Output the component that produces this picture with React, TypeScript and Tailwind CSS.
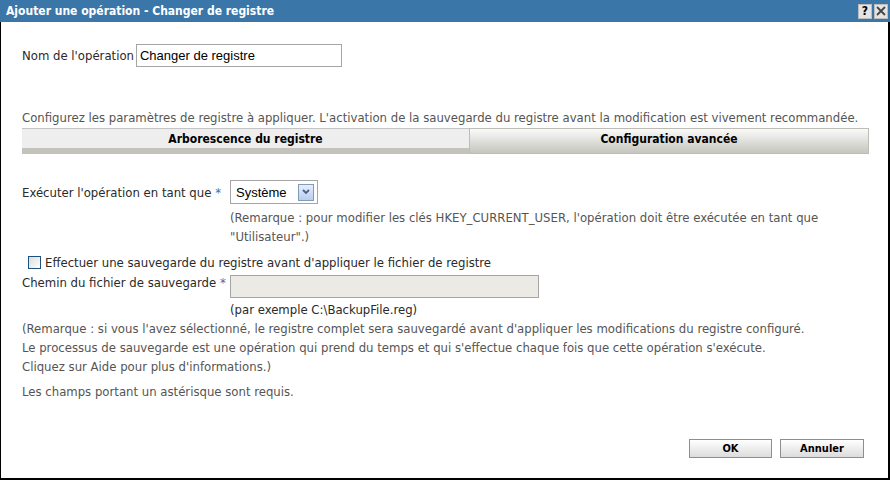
import React from "react";

const font = { fontFamily: '"DejaVu Sans Condensed", "DejaVu Sans", Verdana, sans-serif' };
const arial = { fontFamily: '"Liberation Sans", Arial, sans-serif' };

export default function App() {
  return (
    <div className="w-[890px] h-[480px] bg-white relative overflow-hidden text-[13px] leading-[15px] text-[#2a2a2a]" style={font}>
      <div className="flex flex-col h-full border-l border-r-2 border-b-2 border-black">
        {/* title bar */}
        <div className="h-[22px] bg-[#3a76a8] flex items-center justify-between pl-[6px] pr-[2px] -ml-px -mr-[2px]">
          <span className="text-white font-bold text-[12px]">Ajouter une opération - Changer de registre</span>
          <div className="flex gap-[2px]">
            <div className="w-[14px] h-[15px] bg-[#e4e4e4] border border-[#bdbdbd] flex items-center justify-center text-[12px] font-bold text-black leading-none">?</div>
            <div className="w-[14px] h-[15px] bg-[#e4e4e4] border border-[#bdbdbd] flex items-center justify-center">
              <svg width="10" height="10" viewBox="0 0 10 10"><path d="M1 1L9 9M9 1L1 9" stroke="#444" strokeWidth="1.8" /></svg>
            </div>
          </div>
        </div>

        <div className="pl-[21px] pr-[20px] pt-[22px] flex flex-col">
          <div className="flex items-center gap-[2px] h-[23px]">
            <span>Nom de l'opération</span>
            <div className="w-[206px] h-[23px] border border-[#a5a5a5] flex items-center px-[3px] text-[13px] text-black" style={arial}>
              Changer de registre
            </div>
          </div>

          <div className="mt-[43px] text-[#555] leading-[15px]">Configurez les paramètres de registre à appliquer. L'activation de la sauvegarde du registre avant la modification est vivement recommandée.</div>

          <div className="mt-[3px] flex w-[847px] h-[26px] text-[12px]">
            <div className="w-[447px] flex flex-col border-t border-[#c4c4c4] bg-[#eeeeee]">
              <div className="flex-1 flex items-center justify-center pt-[1px] font-bold text-black">Arborescence du registre</div>
              <div className="h-[6px] bg-[#c3c3bc]" />
            </div>
            <div className="flex-1 flex items-center justify-center pb-[3px] font-bold text-black border border-[#bdbdb5] bg-gradient-to-b from-[#fafafa] to-[#c6c6be]">Configuration avancée</div>
          </div>

          <div className="mt-[26px] flex">
            <div className="w-[208px] pt-[5px]">Exécuter l'opération en tant que <span className="text-[#3a6fb0]">*</span></div>
            <div className="flex flex-col">
              <div className="w-[88px] h-[24px] border border-[#a5a5a5] flex items-center justify-between pl-[5px] pr-[3px] text-[13px] text-black" style={arial}>
                <span>Système</span>
                <div className="w-[16px] h-[17px] border border-[#7f9db9] bg-gradient-to-b from-[#e6eefc] to-[#b9cdf0] flex items-center justify-center">
                  <svg width="8" height="6" viewBox="0 0 8 6"><path d="M1 1L4 4L7 1" stroke="#4d6185" strokeWidth="1.8" fill="none" /></svg>
                </div>
              </div>
              <div className="mt-[4px] text-[#555] leading-[19px]">(Remarque : pour modifier les clés HKEY_CURRENT_USER, l'opération doit être exécutée en tant que<br />"Utilisateur".)</div>
            </div>
          </div>

          <div className="mt-[9px] flex items-center gap-[4px] pl-[6px] h-[14px]">
            <div className="w-[13px] h-[13px] border border-[#1c5180] bg-gradient-to-br from-[#dcdcd7] to-white" />
            <span>Effectuer une sauvegarde du registre avant d'appliquer le fichier de registre</span>
          </div>

          <div className="mt-[6px] flex">
            <div className="w-[208px]">Chemin du fichier de sauvegarde <span className="text-[#3a6fb0]">*</span></div>
            <div className="flex flex-col">
              <div className="w-[309px] h-[23px] border border-[#a5a5a5] bg-[#ebeae4]" />
              <div className="mt-[3px] leading-[17px]">(par exemple C:\BackupFile.reg)</div>
            </div>
          </div>

          <div className="mt-[1px] text-[#555] leading-[19px]">
            (Remarque : si vous l'avez sélectionné, le registre complet sera sauvegardé avant d'appliquer les modifications du registre configuré.<br />
            Le processus de sauvegarde est une opération qui prend du temps et qui s'effectue chaque fois que cette opération s'exécute.<br />
            Cliquez sur Aide pour plus d'informations.)
          </div>

          <div className="mt-[8px] text-[#555]">Les champs portant un astérisque sont requis.</div>
        </div>

        <div className="mt-auto mb-[20px] flex justify-end gap-[8px] pr-[24px] text-[11px]">
          <div className="w-[83px] h-[19px] border border-[#8e8e8e] bg-gradient-to-b from-white to-[#dcdcdc] flex items-center justify-center font-bold text-black">OK</div>
          <div className="w-[84px] h-[19px] border border-[#8e8e8e] bg-gradient-to-b from-white to-[#dcdcdc] flex items-center justify-center font-bold text-black">Annuler</div>
        </div>
      </div>
    </div>
  );
}
